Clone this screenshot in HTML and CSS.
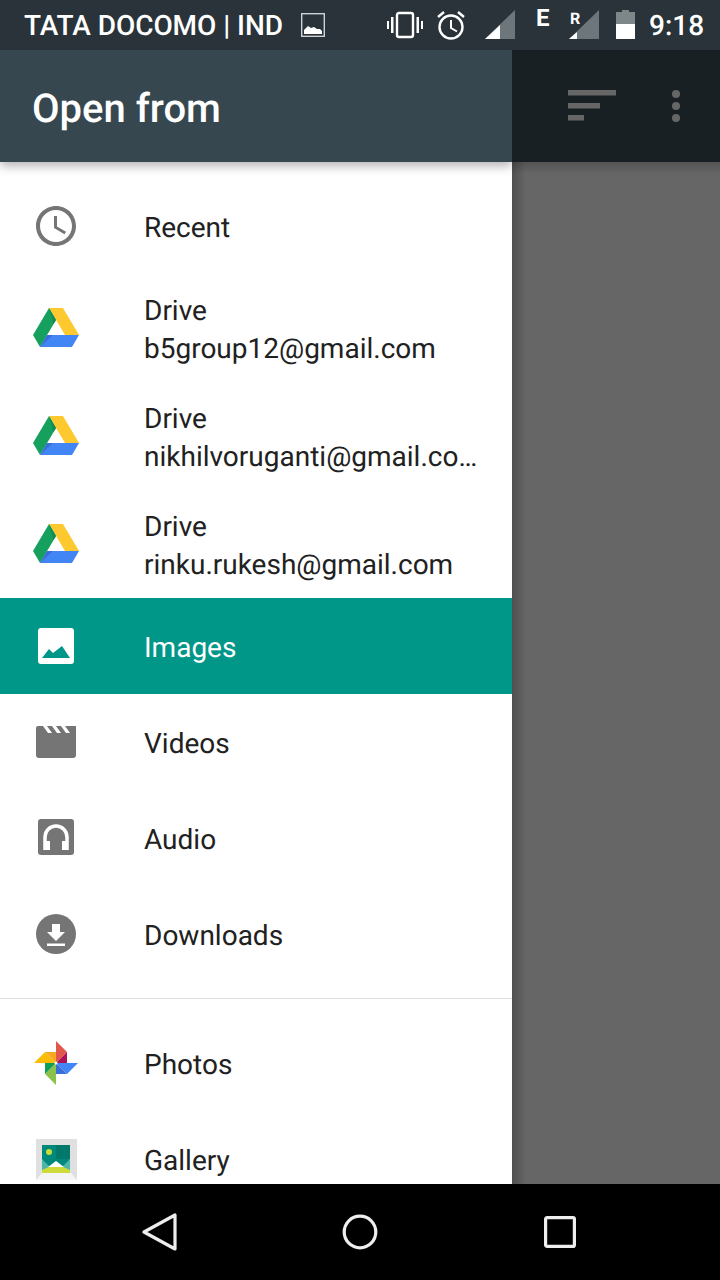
FILE: index.html
```html
<!DOCTYPE html>
<html lang="en">
<head>
    <meta charset="UTF-8">
    <meta name="viewport" content="width=device-width, initial-scale=1.0">
    <title>Open from</title>
    <link rel="stylesheet" href="styles.css">
</head>
<body>
    <div class="status-bar">
        <span class="carrier">TATA DOCOMO | IND</span>
        <svg class="note-image" width="24" height="24" viewBox="0 0 24 24">
            <rect x=".7" y=".7" width="22.600" height="22.600" fill="none" stroke="#cfd2d4" stroke-width="1.400"/>
            <path d="M3 21v-4l4-4 3 2 3-1 3 2 3 0 2 2v3z" fill="#fff"/>
        </svg>
        <div class="status-icons">
            <svg class="s-vibrate" width="36" height="28" viewBox="0 0 36 28">
                <rect x="10" y="2" width="16" height="24" rx="2" fill="none" stroke="#fff" stroke-width="2.400"/>
                <path d="M0 10h2v8H0zM4 6h2.500v16H4zM29.500 6H32v16h-2.500zM34 10h2v8h-2z" fill="#fff"/>
            </svg>
            <svg class="s-alarm" width="28" height="30" viewBox="0 0 28 30">
                <circle cx="14" cy="17" r="11.500" fill="none" stroke="#fff" stroke-width="2.400"/>
                <path d="M14 10v8l6 3.500" fill="none" stroke="#fff" stroke-width="2"/>
                <path d="M1 7l6-5M27 7l-6-5" fill="none" stroke="#fff" stroke-width="2.400"/>
            </svg>
            <svg class="s-signal" width="30" height="30" viewBox="0 0 30 30">
                <path d="M0 29L30 0v29z" fill="#6d767a"/>
                <path d="M0 29l15-14v14z" fill="#fff"/>
            </svg>
            <span class="net-e">E</span>
            <div class="signal-r">
                <svg width="30" height="30" viewBox="0 0 30 30">
                    <path d="M0 29L30 0v29z" fill="#6d767a"/>
                    <path d="M0 29l8-7v7z" fill="#fff"/>
                </svg>
                <span class="net-r">R</span>
            </div>
            <svg class="s-battery" width="19" height="30" viewBox="0 0 19 30">
                <path d="M6 0h7v2h6v27H0V2h6z" fill="#7d8689"/>
                <rect y="14" width="19" height="15" fill="#fff"/>
            </svg>
            <span class="clock">9:18</span>
        </div>
    </div>

    <div class="screen">
        <div class="drawer">
            <div class="drawer-head">Open from</div>
            <ul class="roots">
                <li class="root">
                    <svg class="icon" viewBox="0 0 24 24"><path fill="#757575" d="M11.990 2C6.470 2 2 6.480 2 12s4.470 10 9.990 10C17.520 22 22 17.520 22 12S17.520 2 11.990 2zM12 20c-4.420 0-8-3.580-8-8s3.580-8 8-8 8 3.580 8 8-3.580 8-8 8zm.5-13H11v6l5.250 3.150.75-1.230-4.500-2.670z"/></svg>
                    <div class="label">Recent</div>
                </li>
                <li class="root tall">
                    <svg class="icon" viewBox="0 0 48 48"><use href="#drive"/></svg>
                    <div class="label"><div>Drive</div><div class="sub">b5group12@gmail.com</div></div>
                </li>
                <li class="root tall">
                    <svg class="icon" viewBox="0 0 48 48"><use href="#drive"/></svg>
                    <div class="label"><div>Drive</div><div class="sub">nikhilvoruganti@gmail.co…</div></div>
                </li>
                <li class="root tall">
                    <svg class="icon" viewBox="0 0 48 48"><use href="#drive"/></svg>
                    <div class="label"><div>Drive</div><div class="sub">rinku.rukesh@gmail.com</div></div>
                </li>
                <li class="root selected">
                    <svg class="icon" viewBox="0 0 48 48">
                        <rect x="6" y="6" width="36" height="36" rx="3" fill="#fff"/>
                        <path d="M10 36l7-9 4 4 9-7 8 12z" fill="#009688"/>
                    </svg>
                    <div class="label">Images</div>
                </li>
                <li class="root">
                    <svg class="icon" viewBox="0 0 48 48"><path fill="#757575" d="M6 8h5l5 7h4l-5-7h5l5 7h4l-5-7h5l5 7h4l-5-7h11v29a3 3 0 0 1-3 3H7a3 3 0 0 1-3-3V10a2 2 0 0 1 2-2z"/></svg>
                    <div class="label">Videos</div>
                </li>
                <li class="root">
                    <svg class="icon" viewBox="0 0 48 48">
                        <rect x="6" y="5" width="36" height="36" rx="3" fill="#757575"/>
                        <path d="M13 36V23a11 11 0 0 1 22 0v13" fill="none" stroke="#fff" stroke-width="3.500"/>
                        <path d="M12 27h6v9h-6zM30 27h6v9h-6z" fill="#fff"/>
                    </svg>
                    <div class="label">Audio</div>
                </li>
                <li class="root">
                    <svg class="icon" viewBox="0 0 48 48">
                        <circle cx="24" cy="24" r="20" fill="#757575"/>
                        <path d="M20 14h8v8h5L24 31l-9-9h5zM15 33.500h18V36H15z" fill="#fff"/>
                    </svg>
                    <div class="label">Downloads</div>
                </li>
                <li class="sep"></li>
                <li class="root">
                    <svg class="icon" viewBox="0 0 48 48">
                        <path d="M24 24V2l11 11z" fill="#e2574c"/>
                        <path d="M24 24l11-11v11z" fill="#ad1457"/>
                        <path d="M24 24h22L35 35z" fill="#4285f4"/>
                        <path d="M24 24l11 11H24z" fill="#3a6fd8"/>
                        <path d="M24 24v22L13 35z" fill="#8bc34a"/>
                        <path d="M24 24L13 35V24z" fill="#0f9d58"/>
                        <path d="M24 24H2l11-11z" fill="#fbbc05"/>
                        <path d="M24 24L13 13h11z" fill="#f9a825"/>
                        <circle cx="24" cy="24" r="1.500" fill="#fff"/>
                    </svg>
                    <div class="label">Photos</div>
                </li>
                <li class="root">
                    <svg class="icon" viewBox="0 0 48 48">
                        <rect x="4" y="4" width="41" height="41" fill="#e0e0e0"/>
                        <path d="M4 45l6-7h29l6 7z" fill="#f5f5f5"/>
                        <rect x="10" y="10" width="28" height="28" fill="#00897b"/>
                        <path d="M24 10h14v14H24z" fill="#00796b"/>
                        <path d="M10 24l14 14H10zM38 24L24 38h14z" fill="#4db6ac"/>
                        <path d="M10 38v-3l7-3h14l7 3v3z" fill="#cddc39"/>
                        <path d="M16 32l8-6 8 6z" fill="#fff"/>
                        <circle cx="17" cy="17" r="3" fill="#cddc39"/>
                    </svg>
                    <div class="label">Gallery</div>
                </li>
            </ul>
        </div>
        <div class="scrim">
            <div class="scrim-bar">
                <svg width="48" height="32" viewBox="0 0 48 32">
                    <path d="M0 0h48v5.500H0zM0 13h32v5.500H0zM0 25h16v5.500H0z" fill="#666"/>
                </svg>
                <svg class="more" width="8" height="32" viewBox="0 0 8 32">
                    <circle cx="4" cy="4" r="4" fill="#666"/>
                    <circle cx="4" cy="16" r="4" fill="#666"/>
                    <circle cx="4" cy="28" r="4" fill="#666"/>
                </svg>
            </div>
            <div class="scrim-body"></div>
        </div>
    </div>

    <div class="nav-bar">
        <svg width="36" height="38" viewBox="0 0 36 38">
            <path d="M2 19L33 2v34z" fill="none" stroke="#eee" stroke-width="3.200" stroke-linejoin="round"/>
        </svg>
        <svg width="36" height="36" viewBox="0 0 36 36">
            <circle cx="18" cy="18" r="15.800" fill="none" stroke="#eee" stroke-width="3.200"/>
        </svg>
        <svg width="32" height="32" viewBox="0 0 32 32">
            <rect x="1.600" y="1.600" width="28.800" height="28.800" rx="1.500" fill="none" stroke="#eee" stroke-width="3.200"/>
        </svg>
    </div>

    <svg class="defs" width="0" height="0">
        <defs>
            <g id="drive" transform="translate(0 -2)">
                <path d="M17 6h14l16 27H33z" fill="#fdc92f"/>
                <path d="M17 6L1 33l7 12 16-27z" fill="#16a05d"/>
                <path d="M8 45h32l7-12H15z" fill="#4285f4"/>
                <path d="M17 6l7 12-2.500 4z" fill="#148a50"/>
                <path d="M8 45l7-12h6z" fill="#3a6fd8"/>
            </g>
        </defs>
    </svg>
</body>
</html>
```

FILE: styles.css
```css
body, html {
    margin: 0;
    padding: 0;
    width: 100%;
    height: 100%;
    overflow: hidden;
    background-color: #000;
}

body {
    display: flex;
    flex-direction: column;
    font-family: Roboto, "Noto Sans", sans-serif;
    text-rendering: geometricPrecision;
}

.defs {
    position: absolute;
}

/* status bar */
.status-bar {
    height: 50px;
    flex: none;
    display: flex;
    align-items: center;
    background: #293339;
    color: #fff;
    padding-left: 24px;
}

.carrier {
    font-size: 28px;
    font-weight: 500;
    letter-spacing: -0.05px;
    white-space: nowrap;
    width: 277px;
}

.note-image {
    flex: none;
}

.status-icons {
    display: flex;
    align-items: center;
    margin-left: 62px;
}

.s-alarm {
    margin-left: 14px;
}

.s-signal {
    margin-left: 20px;
}

.net-e {
    width: 16px;
    margin-left: 21px;
    margin-top: -14px;
    font-size: 24px;
    font-weight: 700;
}

.signal-r {
    position: relative;
    width: 30px;
    height: 30px;
    margin-left: 17px;
}

.net-r {
    position: absolute;
    top: -1px;
    left: 1px;
    font-size: 16px;
    font-weight: 700;
}

.s-battery {
    margin-left: 17px;
}

.clock {
    margin-left: 14px;
    font-size: 28px;
    font-weight: 500;
}

/* drawer + scrim */
.screen {
    flex: 1;
    min-height: 0;
    display: flex;
}

.drawer {
    width: 512px;
    flex: none;
    display: flex;
    flex-direction: column;
    background: #fff;
    overflow: hidden;
}

.drawer-head {
    height: 112px;
    flex: none;
    display: flex;
    align-items: center;
    padding-left: 32px;
    padding-top: 4px;
    box-sizing: border-box;
    background: #37474f;
    color: #fff;
    font-size: 40px;
    font-weight: 500;
    box-shadow: 0 4px 10px rgba(0, 0, 0, 0.3);
    position: relative;
}

.roots {
    list-style: none;
    margin: 0;
    padding: 16px 0 0;
}

.root {
    height: 96px;
    display: flex;
    align-items: center;
    padding-left: 32px;
    color: #212121;
    font-size: 28px;
}

.root.tall {
    height: 108px;
}

.root.selected {
    background: #009688;
    color: #fff;
}

.icon {
    width: 48px;
    height: 48px;
    flex: none;
    margin-right: 64px;
}

.label {
    min-width: 0;
    flex: 1;
    padding-top: 4px;
    line-height: 38px;
}

.sub {
    white-space: nowrap;
}

.sep {
    height: 1px;
    margin: 16px 0;
    background: #e0e0e0;
}

.scrim {
    flex: 1;
    display: flex;
    flex-direction: column;
}

.scrim-bar {
    height: 112px;
    flex: none;
    display: flex;
    align-items: center;
    box-sizing: border-box;
    padding-left: 56px;
    background: #192024;
}

.more {
    margin-left: 56px;
}

.scrim-body {
    flex: 1;
    background:
        linear-gradient(to right, rgba(0, 0, 0, 0.22), rgba(0, 0, 0, 0) 14px),
        linear-gradient(to bottom, rgba(0, 0, 0, 0.18), rgba(0, 0, 0, 0) 12px),
        #666;
}

/* nav */
.nav-bar {
    height: 96px;
    flex: none;
    display: grid;
    grid-template-columns: repeat(3, 200px);
    justify-content: center;
    justify-items: center;
    align-items: center;
    background: #000;
}
```
